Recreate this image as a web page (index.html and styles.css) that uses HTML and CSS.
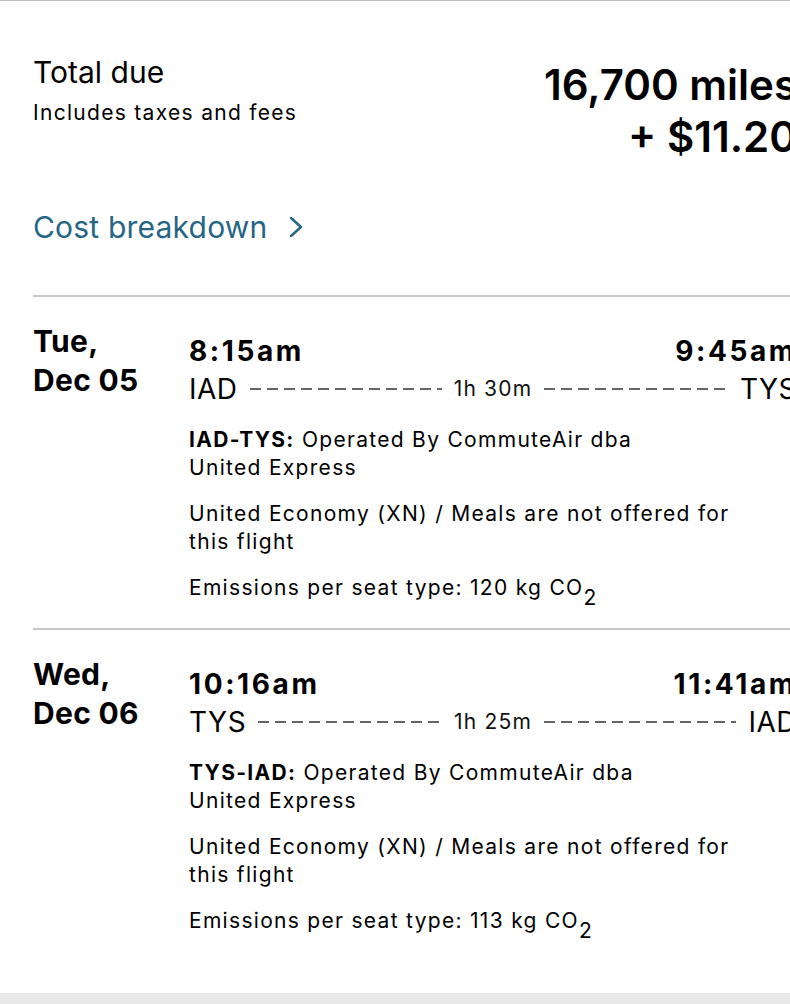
FILE: index.html
```html
<!DOCTYPE html>
<html lang="en">
<head>
<meta charset="utf-8">
<title>Trip summary</title>
<link rel="stylesheet" href="styles.css">
</head>
<body>
<div class="page">
  <section class="summary">
    <div class="total-row">
      <div class="total-label">
        <div class="total-title">Total due</div>
        <div class="total-sub">Includes taxes and fees</div>
      </div>
      <div class="total-amount">
        <div>16,700 miles</div>
        <div>+ $11.20</div>
      </div>
    </div>
    <a class="breakdown" href="#">
      <span>Cost breakdown</span>
      <svg class="chevron" width="14" height="22" viewBox="0 0 14 22" aria-hidden="true">
        <polyline points="2,2 12,11 2,20" fill="none" stroke="currentColor" stroke-width="2.4" stroke-linecap="round" stroke-linejoin="round"/>
      </svg>
    </a>
  </section>

  <section class="flight">
    <div class="date">Tue,<br>Dec 05</div>
    <div class="info">
      <div class="times"><span>8:15am</span><span>9:45am</span></div>
      <div class="route">
        <div class="side"><span class="code">IAD</span><span class="dash"></span></div>
        <span class="dur">1h 30m</span>
        <div class="side"><span class="dash"></span><span class="code">TYS</span></div>
      </div>
      <p class="detail"><b>IAD-TYS:</b> Operated By CommuteAir dba<br>United Express</p>
      <p class="detail">United Economy (XN) / Meals are not offered for<br>this flight</p>
      <p class="detail">Emissions per seat type: 120 kg CO<sub>2</sub></p>
    </div>
  </section>

  <section class="flight last">
    <div class="date">Wed,<br>Dec 06</div>
    <div class="info">
      <div class="times"><span>10:16am</span><span>11:41am</span></div>
      <div class="route">
        <div class="side"><span class="code">TYS</span><span class="dash"></span></div>
        <span class="dur">1h 25m</span>
        <div class="side"><span class="dash"></span><span class="code">IAD</span></div>
      </div>
      <p class="detail"><b>TYS-IAD:</b> Operated By CommuteAir dba<br>United Express</p>
      <p class="detail">United Economy (XN) / Meals are not offered for<br>this flight</p>
      <p class="detail">Emissions per seat type: 113 kg CO<sub>2</sub></p>
    </div>
  </section>
</div>
<div class="band"></div>
</body>
</html>
```

FILE: styles.css
```css
html, body {
  margin: 0;
  padding: 0;
  overflow: hidden;
  background: #ffffff;
}

body {
  border-top: 1px solid #bdbdbd;
  font-family: Inter, "Noto Sans", "Liberation Sans", sans-serif;
  color: #000;
  width: 790px;
}

.page {
  width: 764px;
  padding: 0 33px;
}

.summary {
  padding: 53px 0 50px;
}

.total-row {
  display: flex;
  justify-content: space-between;
  align-items: flex-start;
}

.total-title {
  font-size: 30px;
  line-height: 36px;
  font-weight: 400;
}

.total-sub {
  margin-top: 9px;
  font-size: 21px;
  line-height: 28px;
  letter-spacing: 1.3px;
}

.total-amount {
  margin-top: 5px;
  text-align: right;
  font-size: 42px;
  line-height: 52px;
  font-weight: 600;
  white-space: nowrap;
}

.breakdown {
  margin-top: 46px;
  display: flex;
  align-items: center;
  gap: 22px;
  color: #256586;
  text-decoration: none;
  font-size: 30px;
  line-height: 36px;
  letter-spacing: 0.2px;
}

.chevron {
  display: block;
  flex: none;
}

.flight {
  border-top: 2px solid #c8c8c8;
  padding: 25px 0 26px;
  display: flex;
}

.flight.last {
  padding-bottom: 58px;
}

.date {
  width: 156px;
  flex: none;
  font-size: 30px;
  line-height: 39px;
  font-weight: 700;
  letter-spacing: 0.3px;
}

.info {
  flex: 1;
  margin-top: 10px;
  min-width: 0;
}

.times {
  display: flex;
  justify-content: space-between;
  font-size: 28px;
  line-height: 38px;
  font-weight: 700;
  letter-spacing: 2.6px;
}

.route {
  display: grid;
  grid-template-columns: 1fr auto 1fr;
  align-items: center;
  column-gap: 12px;
  height: 38px;
}

.side {
  display: flex;
  align-items: center;
  gap: 12px;
}

.code {
  font-size: 28px;
  line-height: 38px;
  font-weight: 400;
  letter-spacing: 0.5px;
}

.dash {
  flex: 1;
  height: 2px;
  background: repeating-linear-gradient(to right, #666 0 11px, transparent 11px 17px);
}

.dur {
  font-size: 21px;
  line-height: 28px;
  color: #111;
  letter-spacing: 1.2px;
}

.detail {
  margin: 18px 0 0;
  font-size: 21px;
  line-height: 28px;
  letter-spacing: 1.3px;
}

.detail b {
  font-weight: 700;
}

.detail sub {
  font-size: 21px;
  line-height: 0;
  vertical-align: -10px;
}

.band {
  height: 40px;
  background: #e8e8e8;
}
```
